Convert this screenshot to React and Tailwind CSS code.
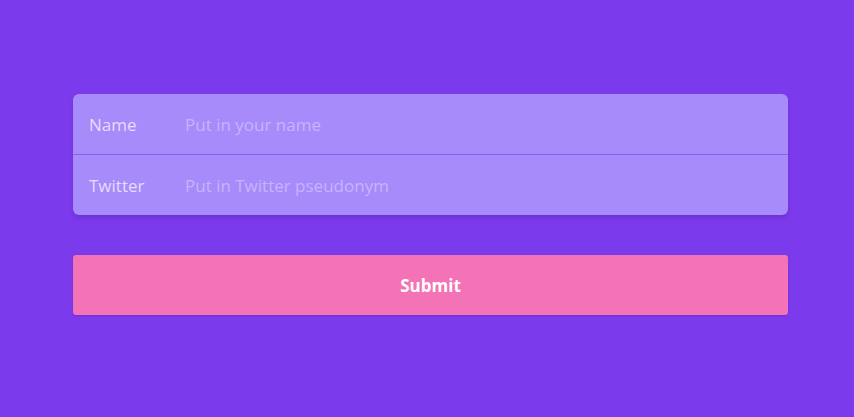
export default function App() {
  return (
    <div className="min-h-[417px] w-full bg-[#7c3aed] pt-[94px]" style={{ fontFamily: '"Open Sans", "Noto Sans", sans-serif' }}>
      <div className="ml-[73px] w-[715px]">
        <div className="rounded-md bg-[#a78bfa] shadow-md">
          <div className="flex h-[61px] items-center border-b border-[#8b5cf6] px-4 pt-px">
            <label className="w-24 text-[17px] text-[#e4ddff]">Name</label>
            <input className="flex-1 bg-transparent text-[17px] text-white outline-none placeholder:text-[#c4b5fd]" placeholder="Put in your name" />
          </div>
          <div className="flex h-[60px] items-center px-4 pt-px">
            <label className="w-24 text-[17px] text-[#e4ddff]">Twitter</label>
            <input className="flex-1 bg-transparent text-[17px] text-white outline-none placeholder:text-[#c4b5fd]" placeholder="Put in Twitter pseudonym" />
          </div>
        </div>
        <button className="mt-[40px] flex h-[60px] w-full items-center justify-center rounded-[3px] bg-[#f472b6] pt-px text-[17px] font-bold text-white shadow-sm">
          Submit
        </button>
      </div>
    </div>
  );
}
